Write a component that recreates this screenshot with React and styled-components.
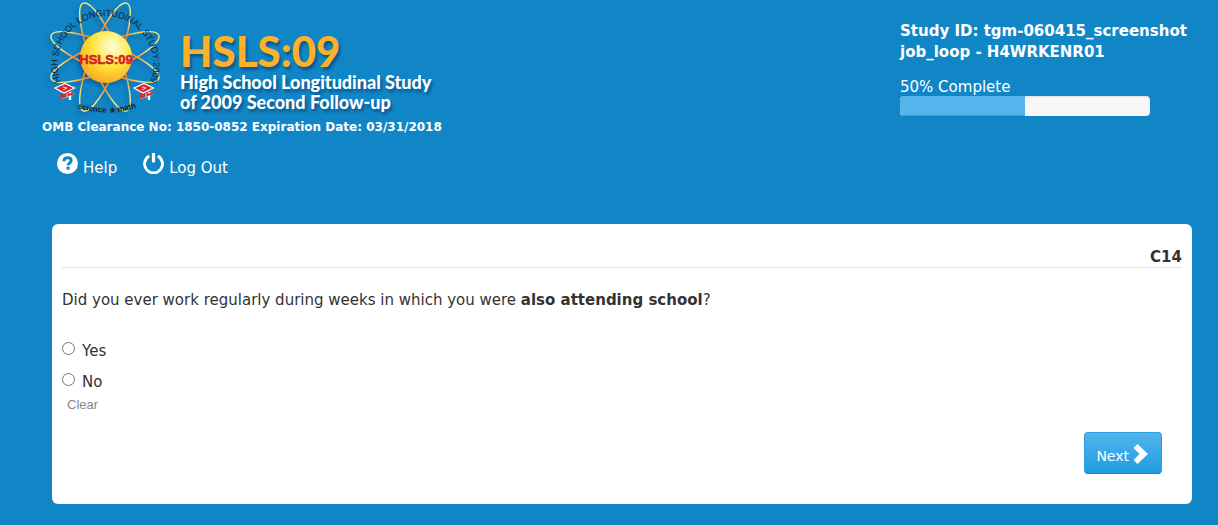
import React, { useState } from 'react'
import styled, { createGlobalStyle } from 'styled-components'

const GlobalStyle = createGlobalStyle`
  *, *::before, *::after {
    box-sizing: border-box;
  }

  body {
    margin: 0;
    background: #1186c7;
    color: #333;
    font-family: Verdana, 'DejaVu Sans', sans-serif;
    font-size: 15px;
    line-height: 21px;
  }
`

const Page = styled.div`
  padding: 0 26px 20px 42px;
`

const Header = styled.header`
  display: flex;
  justify-content: space-between;
  color: #fff;
`

const Brand = styled.div`
  display: flex;
  gap: 10px;
`

const Logo = styled.svg`
  width: 128px;
  height: 117px;
  flex: none;
`

const Titles = styled.div`
  padding-top: 30px;
  font-family: Lato, sans-serif;
  text-shadow: 2px 3px 3px rgba(0, 40, 80, 0.5);
`

const Title = styled.h1`
  margin: 0;
  color: #fdb02b;
  font-size: 42px;
  font-weight: 900;
  line-height: 42px;
`

const Subtitle = styled.p`
  margin: 0;
  font-size: 18px;
  font-weight: 900;
  line-height: 20px;
`

const Clearance = styled.p`
  margin: 0;
  font-size: 12px;
  font-weight: bold;
  line-height: 20px;
`

const Status = styled.div`
  width: 292px;
  padding-top: 21px;
  white-space: nowrap;
`

const StudyId = styled.p`
  margin: 0 0 15px;
  font-weight: bold;
`

const ProgressLabel = styled.div`
  line-height: 18px;
`

const Track = styled.div`
  width: 250px;
  height: 20px;
  overflow: hidden;
  border-radius: 4px;
  background: #f7f7f7;
  box-shadow: inset 0 1px 2px rgba(0, 0, 0, 0.1);
`

const Bar = styled.div`
  height: 100%;
  background: #54b4eb;
  box-shadow: inset 0 -1px 0 rgba(0, 0, 0, 0.15);
`

const Nav = styled.nav`
  display: flex;
  gap: 26px;
  padding: 16px 15px 45px;
`

const NavLink = styled.a`
  display: flex;
  align-items: flex-start;
  gap: 5px;
  color: #fff;
  text-decoration: none;
`

const NavText = styled.span`
  padding-top: 5px;
`

const Icon = styled.svg`
  width: ${({ $width }) => $width || 21}px;
  height: 21px;
  flex: none;
`

const Card = styled.main`
  margin-left: 10px;
  padding: 24px 10px 30px;
  border-radius: 6px;
  background: #fff;
`

const QuestionCode = styled.h2`
  margin: 0 0 22px;
  border-bottom: 1px solid #e5e5e5;
  font-size: 15px;
  line-height: 19px;
  text-align: right;
`

const Fieldset = styled.fieldset`
  margin: 0;
  padding: 0;
  border: 0;
`

const Question = styled.legend`
  margin-bottom: 30px;
  padding: 0;
`

const Option = styled.label`
  display: flex;
  gap: 7px;
  width: fit-content;
  margin-bottom: 10px;

  &:last-of-type {
    margin-bottom: 0;
  }
`

const Radio = styled.input`
  width: 13px;
  height: 13px;
  margin: 1px 0 0;
`

const ClearButton = styled.button`
  display: block;
  margin-left: 5px;
  padding: 0;
  border: 0;
  background: none;
  color: #888;
  font-family: 'Liberation Sans', Arial, sans-serif;
  font-size: 13px;
  line-height: 24px;
  cursor: pointer;
`

const Actions = styled.div`
  display: flex;
  justify-content: flex-end;
  padding: 15px 20px 0;
`

const NextButton = styled.button`
  display: flex;
  gap: 4px;
  height: 42px;
  padding: 10px 13px 0 11px;
  border: 1px solid #2a9fe6;
  border-bottom-color: #1585c8;
  border-radius: 4px;
  background: linear-gradient(#54b4eb, #1d9ce5);
  color: #fff;
  font-family: inherit;
  font-size: 14px;
  line-height: 26px;
  cursor: pointer;
`

const ORBITS = [22, 68, 112, 158]

const Cap = ({ x, y }) => (
  <g transform={`translate(${x} ${y})`}>
    <path d="M7 15 L20 10 M16 9 V17" stroke="#fff" strokeWidth="2.4" />
    <path d="M6 15 L20 10 M7 12 L15 9" stroke="#d8232a" strokeWidth="2" />
    <path d="M1 5 L11 0.5 L20.5 5 L10 10 Z" fill="#d8232a" stroke="#fff" strokeWidth="1.2" />
    <path d="M9 4 L13 5 L9 7" fill="none" stroke="#fff" strokeWidth="0.8" />
    <path d="M13 10 V15" stroke="#f3d04a" strokeWidth="1" />
  </g>
)

const StudyLogo = () => (
  <Logo viewBox="2 0 128 117" role="img" aria-label="HSLS:09 logo">
    <defs>
      <radialGradient id="sun" cx="0.62" cy="0.3" r="0.75">
        <stop offset="0" stopColor="#fffde0" />
        <stop offset="0.5" stopColor="#ffe63c" />
        <stop offset="1" stopColor="#f9a51c" />
      </radialGradient>
      <radialGradient id="orbit" gradientUnits="userSpaceOnUse" cx="0" cy="0" r="60">
        <stop offset="0.5" stopColor="#f0902c" />
        <stop offset="0.75" stopColor="#f3e67e" />
      </radialGradient>
      <filter id="shade" x="-20%" y="-20%" width="140%" height="140%">
        <feDropShadow dx="-2" dy="3" stdDeviation="2" floodColor="#003a66" floodOpacity="0.5" />
      </filter>
      <path id="ring" d="M65 112 A48 48 0 1 1 66 112" />
      <path id="smile" d="M32 106 Q66 119 102 106" />
    </defs>
    <g filter="url(#shade)">
      <g transform="translate(65 57)" fill="none" stroke="url(#orbit)" strokeWidth="1.4">
        {ORBITS.map((angle) => (
          <ellipse key={angle} rx="58" ry="14" transform={`rotate(${angle})`} />
        ))}
      </g>
      <circle cx="66" cy="57" r="26" fill="url(#sun)" />
    </g>
    <text
      x="66"
      y="64"
      textAnchor="middle"
      fill="#d2232a"
      stroke="#d2232a"
      strokeWidth="0.6"
      fontFamily="'Liberation Sans', sans-serif"
      fontWeight="bold"
      fontSize="13"
    >
      HSLS:09
    </text>
    <text fill="#13202c" fontFamily="'Liberation Sans', sans-serif" fontSize="9">
      <textPath href="#ring" startOffset="50%" textAnchor="middle">
        HIGH SCHOOL LONGITUDINAL STUDY:2009
      </textPath>
    </text>
    <text fill="#13202c" fontFamily="'Liberation Sans', sans-serif" fontWeight="bold" fontSize="8">
      <textPath href="#smile" startOffset="50%" textAnchor="middle">
        science ★ math
      </textPath>
    </text>
    <Cap x={14} y={83} />
    <Cap x={93} y={83} />
  </Logo>
)

const HelpIcon = () => (
  <Icon viewBox="0 0 21 21" aria-hidden="true">
    <circle cx="10.5" cy="10.5" r="10.5" fill="#fff" />
    <path
      d="M6.9 8.2 C6.9 5.6 8.4 4.7 10.6 4.7 C12.9 4.7 14.2 5.8 14.2 7.6 C14.2 10 11.2 9.9 11.2 12.3"
      fill="none"
      stroke="#1186c7"
      strokeWidth="3"
    />
    <path d="M9.5 13.6 H12.7 V16.6 H9.5 Z" fill="#1186c7" />
  </Icon>
)

const PowerIcon = () => (
  <Icon viewBox="0 0 21 21" fill="none" stroke="#fff" strokeWidth="2.8" aria-hidden="true">
    <path d="M6.2 3 A9 9 0 1 0 14.8 3" />
    <path d="M10.5 0 V9.5" strokeWidth="3.2" />
  </Icon>
)

const ChevronIcon = () => (
  <Icon $width={15} viewBox="0 0 15 21" aria-hidden="true">
    <path d="M4.5 1 L15 11 L4.5 21 L0.5 17 L6.5 11 L0.5 5 Z" fill="#fff" />
  </Icon>
)

const App = () => {
  const [answer, setAnswer] = useState('')
  const progress = 50

  return (
    <>
      <GlobalStyle />
      <Page>
        <Header>
          <div>
            <Brand>
              <StudyLogo />
              <Titles>
                <Title>HSLS:09</Title>
                <Subtitle>
                  High School Longitudinal Study
                  <br />
                  of 2009 Second Follow-up
                </Subtitle>
              </Titles>
            </Brand>
            <Clearance>OMB Clearance No: 1850-0852 Expiration Date: 03/31/2018</Clearance>
          </div>
          <Status>
            <StudyId>
              Study ID: tgm-060415_screenshot
              <br />
              job_loop - H4WRKENR01
            </StudyId>
            <ProgressLabel id="progress-label">{progress}% Complete</ProgressLabel>
            <Track
              role="progressbar"
              aria-labelledby="progress-label"
              aria-valuenow={progress}
              aria-valuemin={0}
              aria-valuemax={100}
            >
              <Bar style={{ width: `${progress}%` }} />
            </Track>
          </Status>
        </Header>
        <Nav>
          <NavLink href="#help">
            <HelpIcon />
            <NavText>Help</NavText>
          </NavLink>
          <NavLink href="#logout">
            <PowerIcon />
            <NavText>Log Out</NavText>
          </NavLink>
        </Nav>
        <Card>
          <QuestionCode>C14</QuestionCode>
          <Fieldset>
            <Question>
              Did you ever work regularly during weeks in which you were{' '}
              <strong>also attending school</strong>?
            </Question>
            {['Yes', 'No'].map((option) => (
              <Option key={option}>
                <Radio
                  type="radio"
                  name="answer"
                  value={option}
                  checked={answer === option}
                  onChange={() => setAnswer(option)}
                />
                {option}
              </Option>
            ))}
            <ClearButton type="button" onClick={() => setAnswer('')}>
              Clear
            </ClearButton>
          </Fieldset>
          <Actions>
            <NextButton type="button">
              Next
              <ChevronIcon />
            </NextButton>
          </Actions>
        </Card>
      </Page>
    </>
  )
}

export default App
